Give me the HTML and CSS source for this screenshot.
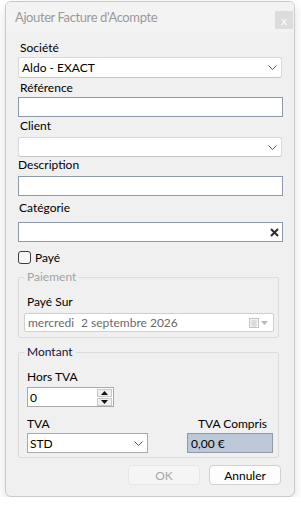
FILE: index.html
```html
<!DOCTYPE html>
<html lang="fr">
<head>
    <meta charset="UTF-8">
    <meta name="viewport" content="width=device-width, initial-scale=1.0">
    <title>Ajouter Facture d'Acompte</title>
    <link rel="stylesheet" href="styles.css">
</head>
<body>
    <div class="window">
        <div class="titlebar">
            <span class="title">Ajouter Facture d'Acompte</span>
            <span class="close">x</span>
        </div>
        <div class="content">
            <div class="lbl lbl-societe">Société</div>
            <div class="combo combo-societe">
                <span>Aldo - EXACT</span>
                <svg class="chevron" width="9" height="6" viewBox="0 0 9 6"><path d="M0.5 0.5 L4.5 4.5 L8.5 0.5" fill="none" stroke="#555" stroke-width="1"/></svg>
            </div>

            <div class="lbl lbl-ref">Référence</div>
            <div class="textbox box-ref"></div>

            <div class="lbl lbl-client">Client</div>
            <div class="combo combo-client">
                <span></span>
                <svg class="chevron" width="9" height="6" viewBox="0 0 9 6"><path d="M0.5 0.5 L4.5 4.5 L8.5 0.5" fill="none" stroke="#555" stroke-width="1"/></svg>
            </div>

            <div class="lbl lbl-desc">Description</div>
            <div class="textbox box-desc"></div>

            <div class="lbl lbl-cat">Catégorie</div>
            <div class="textbox box-cat">
                <svg class="clear" width="9" height="9" viewBox="0 0 9 9"><path d="M1 1 L8 8 M8 1 L1 8" stroke="#2b2b2b" stroke-width="2"/></svg>
            </div>

            <label class="check-row">
                <span class="checkbox"></span>
                <span>Payé</span>
            </label>

            <fieldset class="group group-paiement">
                <legend class="legend-disabled">Paiement</legend>
                <div class="lbl lbl-paye-sur">Payé Sur</div>
                <div class="datebox">
                    <span class="day">mercredi</span>
                    <span class="date">2 septembre 2026</span>
                    <svg class="cal" width="20" height="11" viewBox="0 0 20 11">
                        <rect x="0.5" y="0.5" width="9" height="9" fill="#f4f4f4" stroke="#c4c4c4"/>
                        <path d="M2 3 H8 M2 5 H8 M2 7 H8 M4 2 V9 M6 2 V9" stroke="#d6d6d6" stroke-width="1"/>
                        <path d="M12 3 L19 3 L15.5 7 Z" fill="#b8b8b8"/>
                    </svg>
                </div>
            </fieldset>

            <fieldset class="group group-montant">
                <legend>Montant</legend>
                <div class="lbl lbl-ht">Hors TVA</div>
                <div class="numeric">
                    <span class="num-value">0</span>
                    <div class="spinner">
                        <span class="spin"><svg width="7" height="4" viewBox="0 0 7 4"><path d="M0 4 L3.5 0 L7 4 Z" fill="#111"/></svg></span>
                        <span class="spin"><svg width="7" height="4" viewBox="0 0 7 4"><path d="M0 0 L7 0 L3.5 4 Z" fill="#111"/></svg></span>
                    </div>
                </div>
                <div class="tva-row">
                    <div class="tva-col">
                        <div class="lbl">TVA</div>
                        <div class="combo combo-tva">
                            <span>STD</span>
                            <svg class="chevron" width="9" height="6" viewBox="0 0 9 6"><path d="M0.5 0.5 L4.5 4.5 L8.5 0.5" fill="none" stroke="#555" stroke-width="1"/></svg>
                        </div>
                    </div>
                    <div class="ttc-col">
                        <div class="lbl lbl-ttc">TVA Compris</div>
                        <div class="ttc-box">0,00 €</div>
                    </div>
                </div>
            </fieldset>

            <div class="buttons">
                <button class="btn btn-disabled" disabled>OK</button>
                <button class="btn">Annuler</button>
            </div>
        </div>
    </div>
</body>
</html>
```

FILE: styles.css
```css
body {
    margin: 0;
    padding: 0;
    background-color: #ffffff;
    font-family: "Segoe UI", Lato, "Noto Sans", sans-serif;
    font-size: 12px;
    color: #000;
}

.window {
    box-sizing: border-box;
    width: 290px;
    height: 496px;
    margin: 1px 0 0 5px;
    background-color: #f0f0f0;
    border: 1px solid #c9c9c9;
    border-radius: 6px;
    box-shadow: 0 5px 12px rgba(0, 0, 0, 0.12);
    overflow: hidden;
}

.titlebar {
    height: 30px;
    display: flex;
    align-items: center;
    justify-content: space-between;
    background-color: #f3f3f3;
    padding: 0 1px 0 9px;
}

.title {
    color: #9a9a9a;
    font-size: 13px;
    letter-spacing: -0.4px;
}

.close {
    width: 18px;
    height: 18px;
    margin-top: 6px;
    background-color: #dcdcdc;
    color: #f7f7f7;
    font-size: 11px;
    font-weight: bold;
    display: flex;
    align-items: center;
    justify-content: center;
}

.content {
    padding: 8px 11px 0 12px;
}

.lbl {
    line-height: 16px;
    height: 16px;
}

.lbl-societe { padding-left: 2px; }
.lbl-ref { margin-top: 2px; padding-left: 2px; }
.lbl-client { margin-top: 1px; padding-left: 2px; }
.lbl-desc { margin-top: 0; padding-left: 0; }
.lbl-cat { margin-top: 4px; padding-left: 1px; }

.combo {
    box-sizing: border-box;
    height: 20px;
    display: flex;
    align-items: center;
    justify-content: space-between;
    background-color: #fff;
    border: 1px solid #dadada;
    border-bottom-color: #c6c6c6;
    border-radius: 3px;
    padding: 0 4px 0 3px;
}

.combo-societe {
    height: 21px;
    margin-top: 1px;
    width: 264px;
}

.combo-client {
    margin-top: 3px;
    width: 264px;
}

.chevron {
    margin-top: 1px;
}

.textbox {
    box-sizing: border-box;
    height: 20px;
    background-color: #fff;
    border: 1px solid #8d99a9;
    display: flex;
    align-items: center;
    justify-content: flex-end;
    padding-right: 3px;
}

.box-ref { margin-top: 1px; }
.box-desc { margin-top: 3px; }
.box-cat { margin-top: 6px; }

.check-row {
    display: flex;
    align-items: center;
    gap: 4px;
    height: 14px;
    margin-top: 8px;
}

.checkbox {
    box-sizing: border-box;
    width: 13px;
    height: 13px;
    border: 1px solid #3c3c3c;
    border-radius: 3px;
    background-color: #f8f8f8;
}

.group {
    box-sizing: border-box;
    width: 261px;
    border: 1px solid #dcdcdc;
    border-radius: 2px;
    margin: 0;
}

.group legend {
    padding: 0 3px;
    line-height: 16px;
}

.legend-disabled {
    color: #a3a3a3;
}

.group-paiement {
    margin-top: 5px;
    padding: 9px 4px 5px 5px;
}

.lbl-paye-sur {
    padding-left: 3px;
}

.datebox {
    box-sizing: border-box;
    height: 19px;
    margin-top: 3px;
    background-color: #fff;
    border: 1px solid #cfcfcf;
    border-radius: 2px;
    display: flex;
    align-items: center;
    padding: 0 4px 0 3px;
    color: #6a6a6a;
}

.day {
    width: 53px;
}

.date {
    flex: 1;
}

.cal {
    margin-top: 2px;
}

.group-montant {
    margin-top: 6px;
    padding: 9px 5px 4px 8px;
}

.group-montant legend {
    margin-left: -3px;
    color: #10103a;
}

.numeric {
    box-sizing: border-box;
    width: 87px;
    height: 20px;
    margin-top: 2px;
    background-color: #fff;
    border: 1px solid #a9a9a9;
    display: flex;
    align-items: center;
    justify-content: space-between;
    padding-left: 2px;
}

.spinner {
    display: flex;
    flex-direction: column;
    gap: 1px;
    margin-right: 1px;
}

.spin {
    box-sizing: border-box;
    width: 15px;
    height: 8px;
    background-color: #f0f0f0;
    border: 1px solid #c8c8c8;
    display: flex;
    align-items: center;
    justify-content: center;
}

.tva-row {
    display: flex;
    justify-content: space-between;
    margin-top: 9px;
}

.combo-tva {
    width: 121px;
    margin-top: 1px;
    border-radius: 0;
    border-color: #a9a9a9;
    padding-left: 2px;
}

.lbl-ttc {
    text-align: right;
    padding-right: 6px;
}

.ttc-box {
    box-sizing: border-box;
    width: 86px;
    height: 20px;
    margin-top: 1px;
    background-color: #bdc8d8;
    border: 1px solid #909aa6;
    display: flex;
    align-items: center;
    padding-left: 3px;
}

.buttons {
    display: flex;
    justify-content: flex-end;
    gap: 9px;
    margin-top: 7px;
    padding-right: 2px;
}

.btn {
    box-sizing: border-box;
    width: 72px;
    height: 20px;
    font-family: inherit;
    font-size: 12px;
    background-color: #fdfdfd;
    border: 1px solid #d0d0d0;
    border-radius: 4px;
    color: #000;
    padding: 0;
}

.btn-disabled {
    background-color: #f5f5f5;
    border-color: #e6e6e6;
    color: #a8a8a8;
}
```
